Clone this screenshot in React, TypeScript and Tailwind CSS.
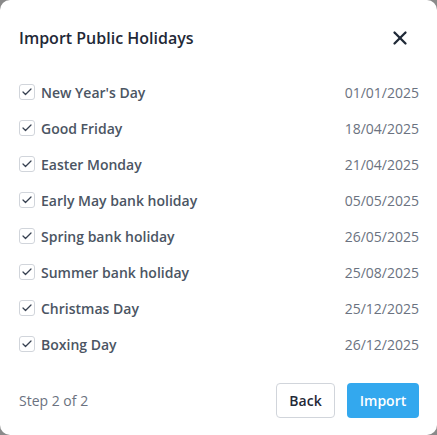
import { X, Check } from "lucide-react";

const holidays = [
  { name: "New Year's Day", date: "01/01/2025" },
  { name: "Good Friday", date: "18/04/2025" },
  { name: "Easter Monday", date: "21/04/2025" },
  { name: "Early May bank holiday", date: "05/05/2025" },
  { name: "Spring bank holiday", date: "26/05/2025" },
  { name: "Summer bank holiday", date: "25/08/2025" },
  { name: "Christmas Day", date: "25/12/2025" },
  { name: "Boxing Day", date: "26/12/2025" },
];

function HolidayRow({ name, date }: { name: string; date: string }) {
  return (
    <label className="flex h-[36px] items-center justify-between">
      <span className="flex items-center gap-[6px]">
        <span className="flex h-[16px] w-[16px] items-center justify-center rounded-[3px] border border-[#d1d5db] bg-white">
          <Check className="h-[12px] w-[12px] text-[#374151]" strokeWidth={2.5} />
        </span>
        <span className="text-[14px] font-semibold text-[#4b5563]">{name}</span>
      </span>
      <span className="text-[14px] text-[#6b7280]">{date}</span>
    </label>
  );
}

export default function App() {
  return (
    <div className="h-[435px] w-[437px] bg-[#8a8a8a] font-['Open_Sans',sans-serif]">
      <div className="flex h-full w-full flex-col rounded-[10px] bg-white pl-[19px] pr-[18px]">
        <header className="flex h-[74px] shrink-0 items-center justify-between pt-[1px]">
          <h2 className="text-[16px] font-semibold text-[#1f2937]">Import Public Holidays</h2>
          <button className="mr-[8px] text-[#1f2937]">
            <X className="h-[22px] w-[22px]" strokeWidth={2.5} />
          </button>
        </header>
        <div className="flex flex-col">
          {holidays.map((h) => (
            <HolidayRow key={h.name} name={h.name} date={h.date} />
          ))}
        </div>
        <footer className="mt-[21px] flex items-center justify-between">
          <span className="text-[14px] text-[#6b7280]">Step 2 of 2</span>
          <div className="flex items-center gap-[12px]">
            <button className="h-[35px] w-[59px] rounded-[4px] border border-[#d1d5db] bg-white text-[14px] font-semibold text-[#1f2937]">
              Back
            </button>
            <button className="h-[35px] w-[72px] rounded-[4px] bg-[#33a8ee] text-[14px] font-semibold text-white">
              Import
            </button>
          </div>
        </footer>
      </div>
    </div>
  );
}
